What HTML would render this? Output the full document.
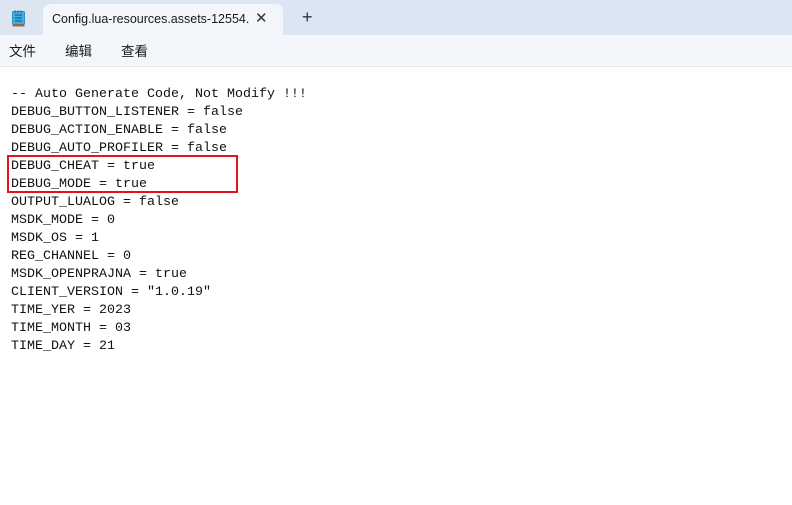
<!DOCTYPE html>
<html><head><meta charset="utf-8"><style>
*{margin:0;padding:0;box-sizing:border-box}
body{width:792px;height:505px;overflow:hidden;background:#fff;font-family:"Liberation Sans","Noto Sans CJK SC",sans-serif;position:relative}
.top{position:absolute;left:0;top:0;width:792px;height:35px;background:#dbe6f2}
.tab{position:absolute;left:43px;top:4px;width:240px;height:31px;background:#f3f6fb;border-radius:7px 7px 0 0}
.tab span{position:absolute;left:9px;top:8px;font-size:12.5px;color:#1a1a1a;white-space:nowrap}
.x{position:absolute;left:212px;top:5px;font-size:15px;color:#333}
.plus{position:absolute;left:302px;top:7px;font-size:18px;color:#333;font-weight:300}
.menu{position:absolute;left:0;top:35px;width:792px;height:32px;background:#f3f6fb;border-bottom:1px solid #e4e7ec}
.menu span{position:absolute;top:5px;font-size:13.5px;color:#1a1a1a}
pre{position:absolute;left:11px;top:86px;font-family:"Liberation Mono",monospace;font-size:13.33px;line-height:18px;color:#111}
.box{position:absolute;left:7px;top:155px;width:231px;height:38px;border:2px solid #e0141e}
</style></head><body>
<div class="top">
<svg style="position:absolute;left:12px;top:10px" width="14" height="17" viewBox="0 0 14 17"><rect x="0.5" y="1.5" width="12" height="13" rx="1" fill="#3fb0e6" stroke="#1e7fb8" stroke-width="0.8"/><rect x="0.5" y="14.5" width="12" height="2" fill="#c85a1e"/><path d="M3 5h7M3 8h7M3 11h7" stroke="#0d4f7a" stroke-width="1"/><path d="M3 0.5v2M6 0.5v2M9 0.5v2" stroke="#0d4f7a" stroke-width="1"/></svg>
<div class="tab"><span>Config.lua-resources.assets-12554.</span><div class="x">✕</div></div>
<div class="plus">+</div>
</div>
<div class="menu"><span style="left:9px">文件</span><span style="left:65px">编辑</span><span style="left:121px">查看</span></div>
<pre>-- Auto Generate Code, Not Modify !!!
DEBUG_BUTTON_LISTENER = false
DEBUG_ACTION_ENABLE = false
DEBUG_AUTO_PROFILER = false
DEBUG_CHEAT = true
DEBUG_MODE = true
OUTPUT_LUALOG = false
MSDK_MODE = 0
MSDK_OS = 1
REG_CHANNEL = 0
MSDK_OPENPRAJNA = true
CLIENT_VERSION = "1.0.19"
TIME_YER = 2023
TIME_MONTH = 03
TIME_DAY = 21</pre>
<div class="box"></div>
</body></html>
